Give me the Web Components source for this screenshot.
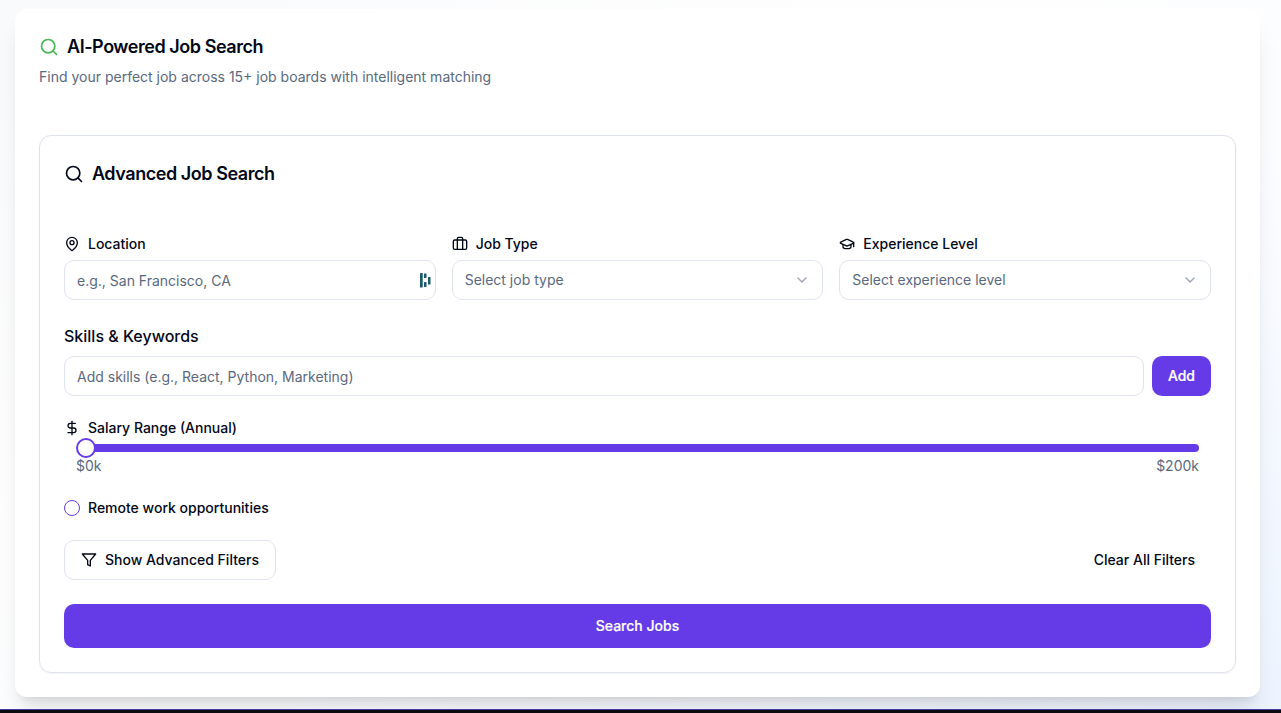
<!DOCTYPE html>
<html lang="en">
<head>
<meta charset="utf-8">
<title>AI-Powered Job Search</title>
<style>
html,body{margin:0;height:100%;overflow:hidden}
body{font-family:Inter,sans-serif;color:#020817;font-size:14px;line-height:20px}
</style>
</head>
<body>
<job-page>
  <panel-card>
    <card-heading icon="search" tint="#45b854">AI-Powered Job Search<span slot="sub">Find your perfect job across 15+ job boards with intelligent matching</span></card-heading>
    <search-form></search-form>
  </panel-card>
</job-page>
<script>
const ICONS = {
  search: '<circle cx="11" cy="11" r="8"/><path d="m21 21-4.3-4.3"/>',
  pin: '<path d="M20 10c0 6-8 12-8 12s-8-6-8-12a8 8 0 0 1 16 0Z"/><circle cx="12" cy="10" r="3"/>',
  briefcase: '<rect width="20" height="14" x="2" y="6" rx="2"/><path d="M16 20V4a2 2 0 0 0-2-2h-4a2 2 0 0 0-2 2v16"/>',
  cap: '<path d="M21.42 10.922a1 1 0 0 0-.019-1.838L12.83 5.18a2 2 0 0 0-1.66 0L2.6 9.08a1 1 0 0 0 0 1.832l8.57 3.908a2 2 0 0 0 1.66 0z"/><path d="M22 10v6"/><path d="M6 12.5V16a6 3 0 0 0 12 0v-3.5"/>',
  chevron: '<path d="m6 9 6 6 6-6"/>',
  dollar: '<path d="M12 2v20"/><path d="M17 5H9.500a3.500 3.500 0 0 0 0 7h5a3.500 3.500 0 0 1 0 7H6"/>',
  filter: '<path d="M22 3H2l8 9.460V19l4 2v-8.540L22 3z"/>'
};
const define = (name, render) => customElements.define(name, class extends HTMLElement {
  constructor() { super(); this.attachShadow({ mode: 'open' }); }
  connectedCallback() { this.shadowRoot.innerHTML = render(this); }
});

define('line-icon', el => `<style>:host{display:block;flex:none}svg{display:block}</style>
<svg width="${el.getAttribute('size') || 16}" height="${el.getAttribute('size') || 16}" viewBox="0 0 24 24" fill="none" stroke="currentColor" stroke-width="2" stroke-linecap="round" stroke-linejoin="round">${ICONS[el.getAttribute('name')]}</svg>`);

define('job-page', () => `<style>
:host{display:flex;flex-direction:column;box-sizing:border-box;height:713px;background:linear-gradient(to bottom right,#f9fafc 0%,#fefefe 35%,#fcfdff 60%,#edf4ff 100%)}
.above{height:0;margin:0 21px 0 15px;box-shadow:0 5px 25px -5px rgba(0,0,0,.06)}
main{flex:1;padding:9px 21px 0 15px}
footer{height:4px;box-sizing:border-box;border-top:1px solid #453b9f;background:#0a0a0f}
</style><div class="above"></div><main><slot></slot></main><footer></footer>`);

define('panel-card', () => `<style>
:host{display:block;box-sizing:border-box;height:688px;padding:24px;border-radius:12px;background:#fff;box-shadow:0 20px 25px -5px rgba(0,0,0,.1),0 8px 10px -6px rgba(0,0,0,.1)}
</style><slot></slot>`);

define('card-heading', el => `<style>
:host{display:block}
h3{display:flex;align-items:center;gap:8px;margin:0;font-size:18px;line-height:28px;font-weight:600;letter-spacing:-.45px}
line-icon{color:${el.getAttribute('tint') || 'inherit'}}
p{margin:6px 0 48px;color:#5a6980}
</style><h3><line-icon name="${el.getAttribute('icon')}" size="20"></line-icon><span><slot></slot></span></h3>${el.querySelector('[slot=sub]') ? '<p><slot name="sub"></slot></p>' : ''}`);

define('field-label', el => `<style>
:host{display:flex;align-items:center;gap:8px;height:16px;font-weight:500;white-space:nowrap}
</style>${el.hasAttribute('icon') ? `<line-icon name="${el.getAttribute('icon')}"></line-icon>` : ''}<slot name="lead"></slot><span><slot></slot></span>`);

define('field-box', el => `<style>
:host{display:flex;align-items:center;justify-content:space-between;box-sizing:border-box;height:40px;padding:0 12px;border:1px solid #dfe3ee;border-radius:10px;background:#fff;color:#5a6980}
:host([text]){padding-top:2px;padding-right:3px}
line-icon{opacity:.6}
</style><span><slot></slot></span><slot name="end"></slot>${el.hasAttribute('select') ? '<line-icon name="chevron"></line-icon>' : ''}`);

define('vault-mark', () => `<style>:host{display:block;margin-top:-2px}svg{display:block}</style>
<svg width="13" height="16" viewBox="0 0 13 16" fill="#1b5a6c"><rect x="1" y="1" width="2.700" height="14.500" rx=".6"/><rect x="5" y="1.500" width="2.500" height="4.500" rx=".6"/><rect x="5" y="10" width="2.500" height="5" rx=".6"/><rect x="9" y="5" width="2.500" height="7.500" rx=".6"/></svg>`);

define('action-button', () => `<style>
:host{display:block}
button{display:flex;align-items:center;justify-content:center;gap:8px;box-sizing:border-box;width:100%;height:40px;padding:0 16px;border:0;border-radius:10px;background:#653be8;color:#fff;-webkit-text-stroke:.2px currentColor;font:500 14px/20px Inter,sans-serif;white-space:nowrap}
:host([large]) button{height:44px}
:host([outline]) button{border:1px solid #dfe3ee;background:#fff;color:#020817;-webkit-text-stroke:0}
:host([ghost]) button{background:none;color:#020817;-webkit-text-stroke:0}
</style><button type="button"><slot name="icon"></slot><span><slot></slot></span></button>`);

define('salary-slider', () => `<style>
:host{display:block;padding:0 12px;margin-top:2px;color:#5a6980}
.slider{display:flex;align-items:center;height:20px}
.thumb{flex:none;box-sizing:border-box;width:20px;height:20px;border:2px solid #653be8;border-radius:50%;background:#fff}
.track{flex:1;height:8px;margin-left:-2px;border-radius:0 4px 4px 0;background:#653be8}
.ends{display:flex;justify-content:space-between;margin-top:-2px}
</style><div class="slider"><div class="thumb"></div><div class="track"></div></div><div class="ends"><span>$0k</span><span>$200k</span></div>`);

define('search-form', () => `<style>
:host{display:block;box-sizing:border-box;height:538px;padding:24px;border:1px solid #dfe3ee;border-radius:12px;box-shadow:0 1px 2px rgba(0,0,0,.05)}
form{display:flex;flex-direction:column;gap:24px;margin-top:48px}
.cols{display:grid;grid-template-columns:repeat(3,1fr);gap:16px}
.field{display:flex;flex-direction:column;gap:8px}
h4{margin:0;font-size:16px;line-height:24px;font-weight:500}
.row{display:flex;gap:8px}
.row field-box{flex:1}
.between{display:flex;justify-content:space-between}
.check{box-sizing:border-box;width:16px;height:16px;border:1px solid #653be8;border-radius:50%}
</style>
<card-heading icon="search">Advanced Job Search</card-heading>
<form>
<div class="cols">
<div class="field"><field-label icon="pin">Location</field-label><field-box text>e.g., San Francisco, CA<vault-mark slot="end"></vault-mark></field-box></div>
<div class="field"><field-label icon="briefcase">Job Type</field-label><field-box select>Select job type</field-box></div>
<div class="field"><field-label icon="cap">Experience Level</field-label><field-box select>Select experience level</field-box></div>
</div>
<div class="field"><h4>Skills &amp; Keywords</h4><div class="row"><field-box text>Add skills (e.g., React, Python, Marketing)</field-box><action-button>Add</action-button></div></div>
<div><field-label icon="dollar">Salary Range (Annual)</field-label><salary-slider></salary-slider></div>
<field-label><div class="check" slot="lead"></div>Remote work opportunities</field-label>
<div class="between"><action-button outline><line-icon slot="icon" name="filter"></line-icon>Show Advanced Filters</action-button><action-button ghost>Clear All Filters</action-button></div>
<action-button large>Search Jobs</action-button>
</form>`);
</script>
</body>
</html>
